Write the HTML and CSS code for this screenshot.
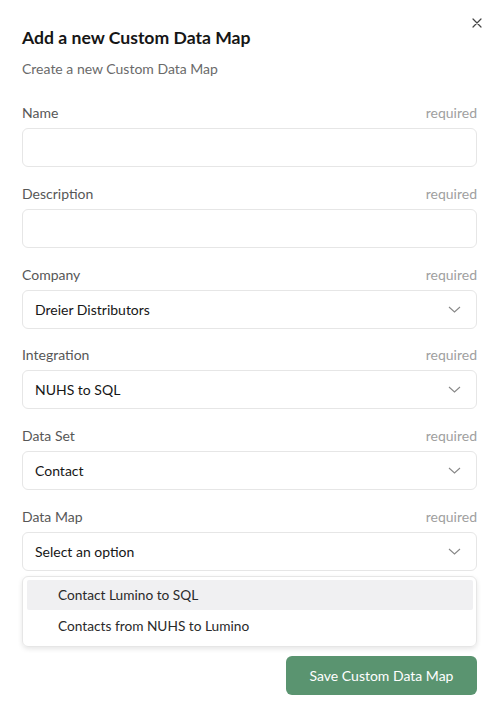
FILE: index.html
```html
<!DOCTYPE html>
<html lang="en">

<head>
  <meta charset="UTF-8">
  <title>Add a new Custom Data Map</title>
  <link rel="stylesheet" href="styles.css">
</head>

<body>
  <div class="modal">
    <div class="header">
      <div>
        <h1>Add a new Custom Data Map</h1>
        <p class="subtitle">Create a new Custom Data Map</p>
      </div>
      <button class="close" type="button" aria-label="Close">
        <svg width="10" height="10" viewBox="0 0 10 10">
          <path d="M1 1L9 9M9 1L1 9" stroke="#444" stroke-width="1.2" stroke-linecap="round" />
        </svg>
      </button>
    </div>

    <div class="field">
      <div class="label-row"><span>Name</span><span class="req">required</span></div>
      <div class="input"></div>
    </div>

    <div class="field">
      <div class="label-row"><span>Description</span><span class="req">required</span></div>
      <div class="input"></div>
    </div>

    <div class="field">
      <div class="label-row"><span>Company</span><span class="req">required</span></div>
      <div class="input select">Dreier Distributors
        <svg width="13" height="7" viewBox="0 0 13 7"><path d="M1 1l5.5 5 5.5-5" fill="none" stroke="#888" stroke-width="1.1" /></svg>
      </div>
    </div>

    <div class="field">
      <div class="label-row"><span>Integration</span><span class="req">required</span></div>
      <div class="input select">NUHS to SQL
        <svg width="13" height="7" viewBox="0 0 13 7"><path d="M1 1l5.5 5 5.5-5" fill="none" stroke="#888" stroke-width="1.1" /></svg>
      </div>
    </div>

    <div class="field">
      <div class="label-row"><span>Data Set</span><span class="req">required</span></div>
      <div class="input select">Contact
        <svg width="13" height="7" viewBox="0 0 13 7"><path d="M1 1l5.5 5 5.5-5" fill="none" stroke="#888" stroke-width="1.1" /></svg>
      </div>
    </div>

    <div class="field last">
      <div class="label-row"><span>Data Map</span><span class="req">required</span></div>
      <div class="input select">Select an option
        <svg width="13" height="7" viewBox="0 0 13 7"><path d="M1 1l5.5 5 5.5-5" fill="none" stroke="#888" stroke-width="1.1" /></svg>
      </div>
      <ul class="menu">
        <li class="active">Contact Lumino to SQL</li>
        <li>Contacts from NUHS to Lumino</li>
      </ul>
    </div>

    <div class="actions">
      <button class="save" type="button">Save Custom Data Map</button>
    </div>
  </div>
</body>

</html>
```

FILE: styles.css
```css
body {
  margin: 0;
  background: #fff;
  font-family: Lato, "Noto Sans", sans-serif;
  color: #1c1c1c;
}

.modal {
  padding: 14px 23px 10px 22px;
}

.header {
  display: flex;
  justify-content: space-between;
  align-items: flex-start;
  margin-bottom: 24px;
}

h1 {
  margin: 12px 0 0;
  font-size: 17.6px;
  line-height: 24px;
  font-weight: 700;
  color: #161616;
}

.subtitle {
  margin: 9px 0 0;
  font-size: 14px;
  line-height: 20px;
  color: #6a6a6a;
}

.close {
  border: none;
  background: none;
  padding: 0;
  margin: 4px -5px 0 0;
  width: 10px;
  height: 10px;
  display: flex;
  cursor: pointer;
}

.field {
  margin-bottom: 16.8px;
}

.field.last {
  margin-bottom: 9px;
}

.label-row {
  display: flex;
  justify-content: space-between;
  font-size: 14px;
  line-height: 20px;
  color: #575757;
  margin-bottom: 5px;
}

.req {
  color: #a0a0a0;
}

.input {
  height: 39px;
  box-sizing: border-box;
  border: 1px solid #e6e6e6;
  border-radius: 6px;
  padding: 0 12px;
  display: flex;
  align-items: center;
  justify-content: space-between;
  font-size: 14px;
  color: #161616;
}

.input svg {
  margin-right: 3px;
}

.menu {
  list-style: none;
  margin: 5px 0 0;
  padding: 3px 3px 6px 4px;
  border: 1px solid #e6e6e6;
  border-radius: 6px;
  box-shadow: 0 2px 5px rgba(0, 0, 0, 0.1);
}

.menu li {
  height: 30px;
  line-height: 30px;
  padding-left: 31px;
  font-size: 13.7px;
  color: #2a2a2a;
  border-radius: 2px;
}

.menu li + li {
  line-height: 32px;
}

.menu li.active {
  background: #f0f0f2;
}

.actions {
  display: flex;
  justify-content: flex-end;
}

.save {
  width: 191px;
  height: 39px;
  border: none;
  border-radius: 6px;
  background: #5a9470;
  color: #fff;
  font-family: inherit;
  font-size: 14px;
  cursor: pointer;
}
```
